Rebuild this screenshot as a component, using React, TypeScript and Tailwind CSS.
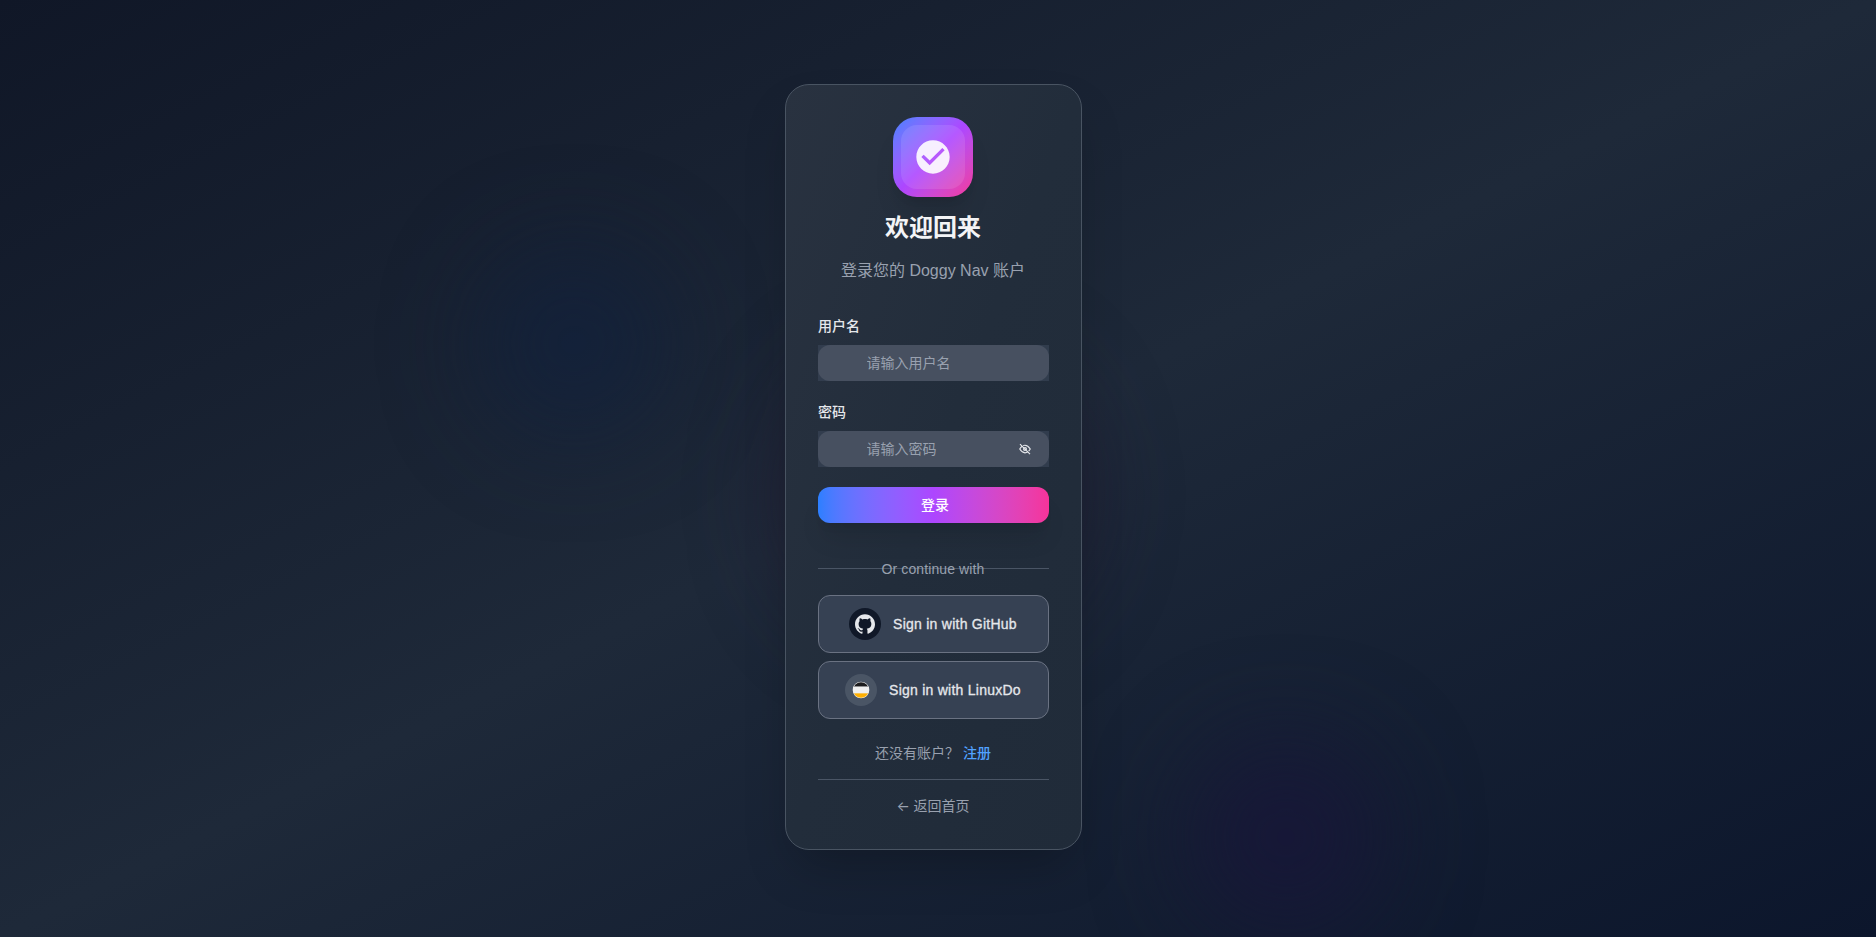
import React from 'react';

const EyeOff = () => (
  <svg className="h-3.5 w-3.5" viewBox="0 0 48 48" fill="none" stroke="currentColor" strokeWidth="4">
    <path d="M14 14.5c-2.69 2-5.415 5.33-8 9.5 5.373 8.667 11.373 13 18 13 3.325 0 6.491-1.09 9.5-3.271M17.463 12.5C19 11 21.75 11 24 11c6.627 0 12.627 4.333 18 13-1.766 2.848-3.599 5.228-5.5 7.14" />
    <path d="M29 24a5 5 0 1 1-10 0 5 5 0 0 1 10 0ZM6.852 7.103l34.294 34.294" />
  </svg>
);

const GitHub = () => (
  <svg className="h-5 w-5" viewBox="0 0 24 24" fill="currentColor">
    <path d="M12 .297c-6.63 0-12 5.373-12 12 0 5.303 3.438 9.8 8.205 11.385.6.113.82-.258.82-.577 0-.285-.01-1.04-.015-2.04-3.338.724-4.042-1.61-4.042-1.61C4.422 18.07 3.633 17.7 3.633 17.7c-1.087-.744.084-.729.084-.729 1.205.084 1.838 1.236 1.838 1.236 1.07 1.835 2.809 1.305 3.495.998.108-.776.417-1.305.76-1.605-2.665-.3-5.466-1.332-5.466-5.93 0-1.31.465-2.38 1.235-3.22-.135-.303-.54-1.523.105-3.176 0 0 1.005-.322 3.3 1.23.96-.267 1.98-.399 3-.405 1.02.006 2.04.138 3 .405 2.28-1.552 3.285-1.23 3.285-1.23.645 1.653.24 2.873.12 3.176.765.84 1.23 1.91 1.23 3.22 0 4.61-2.805 5.625-5.475 5.92.42.36.81 1.096.81 2.22 0 1.606-.015 2.896-.015 3.286 0 .315.21.69.825.57C20.565 22.092 24 17.592 24 12.297c0-6.627-5.373-12-12-12" />
  </svg>
);

const LinuxDo = () => (
  <svg className="h-5 w-5" viewBox="0 0 120 120">
    <clipPath id="disc"><circle cx="60" cy="60" r="47" /></clipPath>
    <circle fill="#f0f0f0" cx="60" cy="60" r="50" />
    <g clipPath="url(#disc)">
      <rect fill="#1c1c1e" x="10" y="10" width="100" height="30" />
      <rect fill="#f0f0f0" x="10" y="40" width="100" height="40" />
      <rect fill="#ffb003" x="10" y="80" width="100" height="30" />
    </g>
  </svg>
);

const Field = ({ label, placeholder, type, gap }: { label: string; placeholder: string; type: string; gap: string }) => (
  <label className={`block ${gap}`}>
    <span className="block h-5 text-sm leading-5 font-medium text-[#e5e7eb]">{label}</span>
    <span className="mt-[9px] block bg-[#364153]/80">
      <span className="flex h-9 items-center rounded-xl bg-[#475060] pr-[17px] pl-12">
        <input
          type={type}
          placeholder={placeholder}
          className="h-full w-0 grow bg-transparent pl-[0.6px] text-sm text-white outline-none placeholder:text-[#99a1af]"
        />
        {type === 'password' && <span className="text-[#e5e7eb]"><EyeOff /></span>}
      </span>
    </span>
  </label>
);

const Provider = ({ icon, text, disc }: { icon: React.ReactNode; text: string; disc: string }) => (
  <button className="flex h-[58px] w-full items-center justify-center gap-3 rounded-xl border border-[#6a7282] bg-[#364153] pr-px text-sm font-medium text-[#e5e7eb]">
    <span className={`flex h-8 w-8 items-center justify-center rounded-full ${disc}`}>{icon}</span>
    <span className="tracking-[0.25px] [-webkit-text-stroke:0.3px_currentColor]">{text}</span>
  </button>
);

export default function App() {
  return (
    <div className="relative flex h-[937px] w-full justify-center overflow-hidden bg-linear-to-br from-[#101727] via-[#1e2939] to-[#0c162c] pt-[84px] pr-[9px] font-['Liberation_Sans','Noto_Sans_CJK_SC',sans-serif]">
      <div className="absolute top-[247px] left-[478px] h-48 w-48 rounded-full bg-[#0d2040]/50 blur-[48px]" />
      <div className="absolute top-[741px] left-[1190px] h-48 w-48 rounded-full bg-[#181639]/75 blur-[48px]" />
      <div className="absolute top-[350px] left-[789px] h-72 w-72 rounded-full bg-[#231a33]/70 blur-[48px]" />

      <main className="relative h-[766px] w-[297px] shrink-0 rounded-3xl border border-[#495462] bg-linear-to-br from-[#293240] via-[#222d3b] to-[#202b39] px-8 pt-8 shadow-2xl">
        <header className="flex flex-col items-center pr-px">
          <div className="flex h-20 w-20 items-center justify-center rounded-3xl bg-linear-to-br from-[#3b82ff] via-[#ad46ff] to-[#f6339a] shadow-xl">
            <div className="flex h-16 w-16 items-center justify-center rounded-2xl bg-white/10">
              <svg className="h-10 w-10 text-white/90" viewBox="0 0 24 24" fill="currentColor">
                <path d="M12 2C6.48 2 2 6.48 2 12s4.48 10 10 10 10-4.48 10-10S17.52 2 12 2zm-2 15l-5-5 1.41-1.41L10 14.17l7.59-7.59L19 8l-9 9z" />
              </svg>
            </div>
          </div>
          <h1 className="mt-[15px] text-2xl leading-8 font-bold text-[#f3f4f6]">欢迎回来</h1>
          <p className="mt-[15px] text-base leading-6 whitespace-nowrap text-[#99a1af]">登录您的 Doggy Nav 账户</p>
        </header>

        <form>
          <Field label="用户名" placeholder="请输入用户名" type="text" gap="mt-[33px]" />
          <Field label="密码" placeholder="请输入密码" type="password" gap="mt-[21px]" />
          <div className="mt-5 rounded-xl shadow-xl">
            <button type="button" className="block h-9 w-full rounded-xl bg-linear-to-r from-[#2b7fff] via-[#ad46ff] to-[#f6339a] pl-[3px] text-sm font-medium text-white">登录</button>
          </div>
        </form>

        <div className="mt-[35px] h-5 bg-linear-to-r from-[#4a5565] to-[#4a5565] bg-[length:100%_1px] bg-center bg-no-repeat pt-px pr-px text-center text-sm leading-5 text-[#99a1af]">
          <span className="tracking-[0.1px]">Or continue with</span>
        </div>

        <div className="mt-[17px] flex flex-col gap-2">
          <Provider icon={<GitHub />} text="Sign in with GitHub" disc="bg-[#101828]" />
          <Provider icon={<LinuxDo />} text="Sign in with LinuxDo" disc="bg-[#4a5565]" />
        </div>

        <p className="mt-6 flex h-5 items-center justify-center pr-px text-sm text-[#99a1af]">
          还没有账户？<a className="ml-1 font-medium text-[#51a2ff]">注册</a>
        </p>
        <div className="mt-4 flex justify-center border-t border-[#4a5565] pt-4 pr-px text-sm leading-5 text-[#99a1af]">
          <a><span className="inline-block w-[13px] font-['Inter'] leading-4">←</span> 返回首页</a>
        </div>
      </main>
    </div>
  );
}
